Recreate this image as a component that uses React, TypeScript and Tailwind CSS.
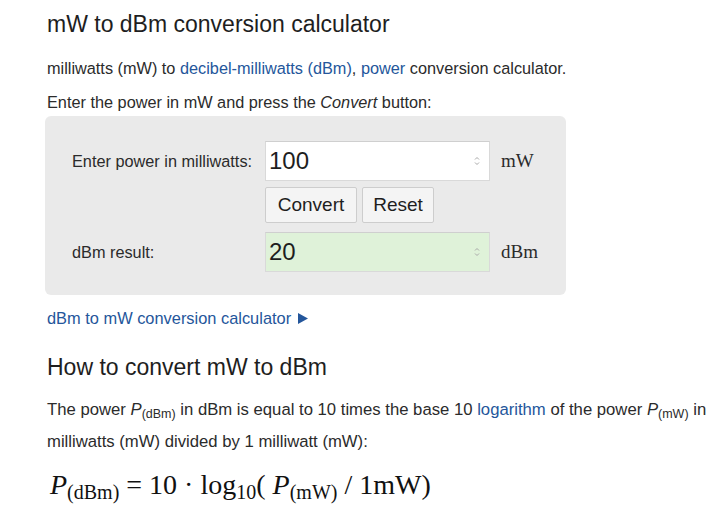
import React, { useState } from 'react';

// Small up/down stepper marks shown at the right end of the number fields
const Stepper: React.FC = () => (
  <svg width="6" height="10" viewBox="0 0 6 10" className="shrink-0">
    <path d="M1 3.5 L3 1.5 L5 3.5" fill="none" stroke="#a8a8a8" strokeWidth="1" />
    <path d="M1 6.5 L3 8.5 L5 6.5" fill="none" stroke="#a8a8a8" strokeWidth="1" />
  </svg>
);

interface NumberFieldProps {
  value: string;
  onChange?: (v: string) => void;
  readOnly?: boolean;
  green?: boolean;
}

const NumberField: React.FC<NumberFieldProps> = ({ value, onChange, readOnly, green }) => (
  <div
    className={`flex items-center w-[225px] h-[40px] border border-[#d9d9d9] border-t-[#cfcfcf] pl-[3px] pr-[9px] ${
      green ? 'bg-[#dff2d9]' : 'bg-white'
    }`}
  >
    <input
      type="text"
      value={value}
      readOnly={readOnly}
      onChange={(e) => onChange && onChange(e.target.value)}
      className="flex-1 min-w-0 bg-transparent outline-none text-[24px] text-[#1e1e1e] font-['Liberation_Sans',Arial,sans-serif]"
    />
    <Stepper />
  </div>
);

const Unit: React.FC<{ children: React.ReactNode }> = ({ children }) => (
  <span className="ml-[11px] text-[19px] text-[#2b2b2b] font-['Liberation_Serif','Times_New_Roman',serif]">{children}</span>
);

const Btn: React.FC<{ children: React.ReactNode; onClick: () => void; className?: string }> = ({
  children,
  onClick,
  className,
}) => (
  <button
    onClick={onClick}
    className={`h-[36px] bg-[#f4f4f4] border border-[#cdcdcd] rounded-[2px] text-[19px] text-[#1e1e1e] ${className ?? ''}`}
  >
    {children}
  </button>
);

export default function App() {
  const [mw, setMw] = useState('100');
  const [dbm, setDbm] = useState('20');

  const convert = () => {
    const p = parseFloat(mw);
    if (!isNaN(p) && p > 0) setDbm(String(Math.round(10 * Math.log10(p) * 1e6) / 1e6));
  };

  const reset = () => {
    setMw('');
    setDbm('');
  };

  return (
    <div className="w-[720px] h-[518px] overflow-hidden bg-white pl-[47px] text-[#2b2b2b] font-['Liberation_Sans',Arial,sans-serif]">
      <h1 className="pt-[10px] text-[23px] leading-[28px] text-[#1e1e1e]">mW to dBm conversion calculator</h1>

      <p className="mt-[20px] text-[16.3px] leading-[20px] whitespace-nowrap">
        milliwatts (mW) to <a className="text-[#24569b]">decibel-milliwatts (dBm)</a>,{' '}
        <a className="text-[#24569b]">power</a> conversion calculator.
      </p>

      <p className="mt-[14px] text-[16.3px] leading-[20px] whitespace-nowrap">
        Enter the power in mW and press the <i>Convert</i> button:
      </p>

      {/* calculator panel */}
      <div className="mt-[4px] ml-[-2px] w-[521px] h-[179px] rounded-[6px] bg-[#eaeaea] pt-[25px] pl-[27px]">
        <div className="flex items-center">
          <span className="w-[193px] text-[16.3px]">Enter power in milliwatts:</span>
          <NumberField value={mw} onChange={setMw} />
          <Unit>mW</Unit>
        </div>
        <div className="flex gap-[5px] mt-[6px] ml-[193px]">
          <Btn onClick={convert} className="w-[92px]">Convert</Btn>
          <Btn onClick={reset} className="w-[72px]">Reset</Btn>
        </div>
        <div className="flex items-center mt-[9px]">
          <span className="w-[193px] text-[16.3px]">dBm result:</span>
          <NumberField value={dbm} readOnly green />
          <Unit>dBm</Unit>
        </div>
      </div>

      <a className="mt-[13px] flex items-center gap-[7px] text-[16.4px] leading-[20px] text-[#24569b]">
        dBm to mW conversion calculator
        <svg width="10" height="11" viewBox="0 0 10 11">
          <path d="M0 0 L10 5.5 L0 11 Z" fill="#24569b" />
        </svg>
      </a>

      <h2 className="mt-[25px] text-[23px] leading-[28px] text-[#1e1e1e]">How to convert mW to dBm</h2>

      <p className="mt-[13px] text-[16.7px] leading-[32px] whitespace-nowrap">
        The power <i>P</i>
        <sub className="text-[12.5px]">(dBm)</sub> in dBm is equal to 10 times the base 10{' '}
        <a className="text-[#24569b]">logarithm</a> of the power <i>P</i>
        <sub className="text-[12.5px]">(mW)</sub> in
        <br />
        milliwatts (mW) divided by 1 milliwatt (mW):
      </p>

      {/* formula */}
      <p className="pl-[3px] text-[28px] leading-[54px] text-[#111] whitespace-nowrap font-['Liberation_Serif','Times_New_Roman',serif]">
        <i>P</i>
        <sub className="text-[20px]">(dBm)</sub> = 10 · log
        <sub className="text-[20px]">10</sub>( <i>P</i>
        <sub className="text-[20px]">(mW)</sub> / 1mW)
      </p>
    </div>
  );
}
